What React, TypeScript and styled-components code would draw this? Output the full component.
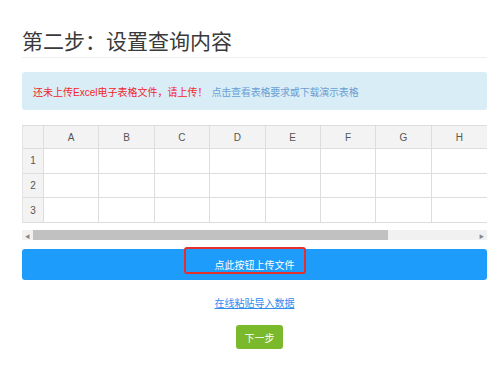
import styled, { createGlobalStyle } from "styled-components";

const GlobalStyle = createGlobalStyle`
  body {
    margin: 0;
    background: #fff;
    font-family: "Liberation Sans", "Noto Sans CJK SC", sans-serif;
  }
`;

const Page = styled.div`
  width: 465px;
  padding: 0 12px 0 22px;
`;

const Title = styled.h2`
  margin: 0;
  padding-top: 24px;
  padding-bottom: 1px;
  line-height: 32px;
  font-size: 21px;
  font-weight: normal;
  color: #3a3a3a;
  font-family: "Noto Sans CJK SC", sans-serif;
  border-bottom: 1px solid #eee;
`;

const Alert = styled.div`
  margin-top: 14px;
  height: 38px;
  padding: 0 11px;
  display: flex;
  align-items: center;
  gap: 4px;
  background: #d9edf7;
  border-radius: 3px;
  font-size: 10px;
  font-family: "Noto Sans CJK SC", sans-serif;
`;

const Warn = styled.span`
  color: #f2262a;
  font-family: "Liberation Sans", "Noto Sans CJK SC", sans-serif;
`;

const Hint = styled.span`
  color: #6a9fd3;
  letter-spacing: -0.2px;
`;

const Sheet = styled.div`
  margin-top: 15px;
  display: grid;
  grid-template-columns: 21px repeat(8, 1fr);
  border-top: 1px solid #ddd;
  border-left: 1px solid #e4e4e4;
`;

const Cell = styled.div<{ $head?: boolean; $body?: boolean; $last?: boolean }>`
  height: ${(p) => (p.$body ? 23.7 : 22)}px;
  display: flex;
  align-items: center;
  justify-content: center;
  background: ${(p) => (p.$head ? "#f3f3f3" : "#fff")};
  border-bottom: 1px solid #ddd;
  border-right: ${(p) => (p.$last ? "none" : "1px solid #ddd")};
  color: #555;
  font-size: 10px;
`;

const Scrollbar = styled.div`
  margin-top: 7px;
  height: 10px;
  display: flex;
  align-items: center;
  background: #f1f1f1;
`;

const Arrow = styled.span`
  width: 11px;
  display: flex;
  justify-content: center;
  font-size: 5px;
  color: #888;
`;

const Track = styled.div`
  flex: 1;
  height: 10px;
`;

const Thumb = styled.div`
  width: 355px;
  height: 10px;
  background: #c1c1c1;
`;

const UploadButton = styled.div`
  position: relative;
  margin-top: 9px;
  height: 31px;
  display: flex;
  align-items: center;
  justify-content: center;
  background: #1e9cfb;
  border-radius: 3px;
  color: #fff;
  font-size: 10px;
  font-family: "Noto Sans CJK SC", sans-serif;
`;

const Highlight = styled.div`
  position: absolute;
  left: 162px;
  top: -2px;
  width: 118px;
  height: 23px;
  border: 2px solid #e2312c;
  border-radius: 3px;
`;

const LinkRow = styled.div`
  margin-top: 13px;
  text-align: center;
`;

const PasteLink = styled.a`
  color: #2d8cf0;
  text-decoration: underline;
  font-size: 10px;
  font-family: "Noto Sans CJK SC", sans-serif;
`;

const NextRow = styled.div`
  margin-top: 14px;
  display: flex;
  justify-content: center;
  padding-left: 10px;
`;

const NextButton = styled.div`
  width: 47px;
  height: 24px;
  display: flex;
  align-items: center;
  justify-content: center;
  background: #7ab92c;
  border-radius: 3px;
  color: #fff;
  font-size: 10px;
  font-family: "Noto Sans CJK SC", sans-serif;
`;

const columns = ["A", "B", "C", "D", "E", "F", "G", "H"];
const rows = [1, 2, 3];

export default function App() {
  return (
    <>
      <GlobalStyle />
      <Page>
        <Title>第二步：设置查询内容</Title>
        <Alert>
          <Warn>还未上传Excel电子表格文件，请上传！</Warn>
          <Hint>点击查看表格要求或下载演示表格</Hint>
        </Alert>
        <Sheet>
          <Cell $head />
          {columns.map((c, i) => (
            <Cell key={c} $head $last={i === columns.length - 1}>
              {c}
            </Cell>
          ))}
          {rows.map((r) => [
            <Cell key={"h" + r} $head $body>
              {r}
            </Cell>,
            ...columns.map((c, i) => (
              <Cell key={c + r} $body $last={i === columns.length - 1} />
            )),
          ])}
        </Sheet>
        <Scrollbar>
          <Arrow>◀</Arrow>
          <Track>
            <Thumb />
          </Track>
          <Arrow>▶</Arrow>
        </Scrollbar>
        <UploadButton>
          点此按钮上传文件
          <Highlight />
        </UploadButton>
        <LinkRow>
          <PasteLink href="#">在线粘贴导入数据</PasteLink>
        </LinkRow>
        <NextRow>
          <NextButton>下一步</NextButton>
        </NextRow>
      </Page>
    </>
  );
}
